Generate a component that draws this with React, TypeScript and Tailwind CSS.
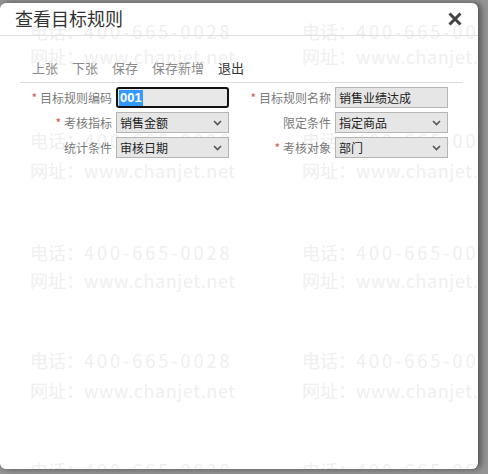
import React from "react";

const cjk = "font-['Noto_Sans_CJK_SC','Noto_Sans',sans-serif]";

// watermark rows, y is the top inside the dialog
const phoneRows = [18, 127, 239, 347, 457];
const siteRows = [43, 157, 267, 377];

const Watermark = () => (
  <div className="absolute inset-0 pointer-events-none select-none text-[#efefef]">
    {phoneRows.map((y) =>
      [30, 302].map((x) => (
        <div
          key={`p${x}-${y}`}
          className={`absolute whitespace-nowrap text-[18px] leading-[20px] ${cjk}`}
          style={{ top: y, left: x }}
        >
          电话：<span className="tracking-[3px]">400-665-0028</span>
        </div>
      ))
    )}
    {siteRows.map((y) =>
      [30, 302].map((x) => (
        <div
          key={`s${x}-${y}`}
          className={`absolute whitespace-nowrap text-[18px] leading-[20px] ${cjk}`}
          style={{ top: y, left: x }}
        >
          网址：<span className="tracking-[0.6px]">www.chanjet.net</span>
        </div>
      ))
    )}
  </div>
);

const Chevron = () => (
  <svg width="9" height="6" viewBox="0 0 9 6" className="shrink-0">
    <polyline points="1,1 4.5,4.5 8,1" fill="none" stroke="#555" strokeWidth="1.6" />
  </svg>
);

interface FieldProps {
  label: string;
  required?: boolean;
  value: string;
  select?: boolean;
  focused?: boolean;
  labelWidth: string;
}

const Field = ({ label, required, value, select, focused, labelWidth }: FieldProps) => (
  <div className="flex items-center h-[21px]">
    <div className={`${labelWidth} text-right text-[12px] leading-[21px] text-[#7a7a7a] whitespace-nowrap`}>
      {required && <span className="text-[#d9534f] mr-[3px]">*</span>}
      {label}
    </div>
    <div
      className={
        focused
          ? "ml-[4px] w-[113px] h-[21px] flex items-center bg-[#e8e8e8] border-2 border-[#111] rounded-[3px] pl-[1px]"
          : "ml-[4px] w-[113px] h-[21px] flex items-center bg-[#e6e6e6] border border-[#b5b5b5] pl-[3px] pr-[6px]"
      }
    >
      {focused ? (
        <span className="bg-[#3399ff] text-white text-[13px] leading-[16px] font-bold font-['Liberation_Sans',sans-serif] px-[1px]">
          {value}
        </span>
      ) : (
        <span className="flex-1 text-[12px] text-[#222] leading-[19px] whitespace-nowrap">{value}</span>
      )}
      {select && <Chevron />}
    </div>
  </div>
);

export default function App() {
  return (
    <div className={`w-[488px] h-[474px] bg-[#949494] pt-[3px] overflow-hidden ${cjk}`}>
      <div className="relative w-[478px] h-[466px] bg-white rounded-[6px] overflow-hidden shadow-[3px_0_6px_rgba(0,0,0,0.45)]">
        <Watermark />
        <div className="relative">
          <div className="h-[33px] flex items-center justify-between pl-[15px] pr-[16px] border-b border-[#e0e0e0]">
            <h1 className="text-[18px] leading-[22px] text-[#333] font-normal mt-[-2px]">查看目标规则</h1>
            <svg width="14" height="14" viewBox="0 0 14 14" className="mt-[-1px]">
              <path d="M1.5 1.5 L12.5 12.5 M12.5 1.5 L1.5 12.5" stroke="#444" strokeWidth="3" strokeLinecap="butt" />
            </svg>
          </div>

          <div className="ml-[20px] mr-[15px] mt-[23px] pl-[12px] pb-[5px] border-b border-[#dcdcdc] flex gap-[14px] text-[13px] leading-[18px]">
            <span className="text-[#8a8a8a]">上张</span>
            <span className="text-[#8a8a8a]">下张</span>
            <span className="text-[#8a8a8a]">保存</span>
            <span className="text-[#8a8a8a]">保存新增</span>
            <span className="text-[#333]">退出</span>
          </div>

          <div className="mt-[4px] flex flex-col gap-[4px]">
            <div className="flex">
              <Field labelWidth="w-[112px]" label="目标规则编码" required value="001" focused />
              <Field labelWidth="w-[102px]" label="目标规则名称" required value="销售业绩达成" />
            </div>
            <div className="flex">
              <Field labelWidth="w-[112px]" label="考核指标" required value="销售金额" select />
              <Field labelWidth="w-[102px]" label="限定条件" value="指定商品" select />
            </div>
            <div className="flex">
              <Field labelWidth="w-[112px]" label="统计条件" value="审核日期" select />
              <Field labelWidth="w-[102px]" label="考核对象" required value="部门" select />
            </div>
          </div>
        </div>
      </div>
    </div>
  );
}
